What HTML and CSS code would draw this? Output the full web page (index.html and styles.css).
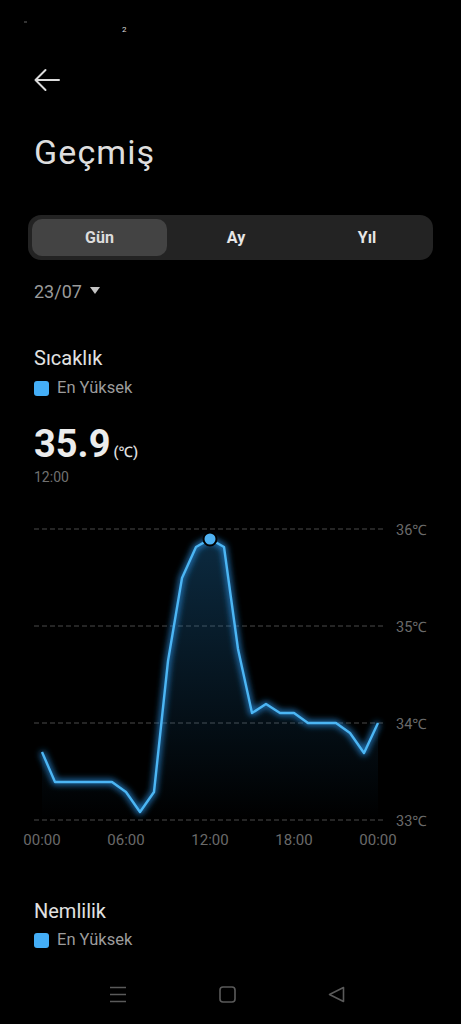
FILE: index.html
```html
<!DOCTYPE html>
<html lang="tr">
<head>
<meta charset="utf-8">
<title>Geçmiş</title>
<link rel="stylesheet" href="styles.css">
</head>
<body>
<div class="screen">
  <div class="statusbar"><span class="dot"></span><span class="sb-num">2</span></div>

  <div class="pad">
    <div class="topbar">
      <svg class="back" width="28" height="24" viewBox="0 0 28 24"><path d="M1.5 12 H25 M11.5 2 L1.5 12 L11.5 22" fill="none" stroke="#dcdcdc" stroke-width="2" stroke-linecap="round" stroke-linejoin="round"/></svg>
    </div>
    <h1 class="title">Geçmiş</h1>

    <div class="segmented">
      <div class="seg active">Gün</div>
      <div class="seg">Ay</div>
      <div class="seg">Yıl</div>
    </div>

    <div class="date">23/07 <span class="caret"></span></div>

    <div class="section-title first">Sıcaklık</div>
    <div class="legend"><span class="sq"></span>En Yüksek</div>

    <div class="value"><span class="num">35.9</span><span class="unit">(℃)</span></div>
    <div class="time">12:00</div>
  </div>

  <svg class="chart" width="461" height="340" viewBox="0 0 461 340">
    <defs>
      <linearGradient id="fillg" x1="0" y1="0" x2="0" y2="1">
        <stop offset="0" stop-color="#1f6fa8" stop-opacity="0.38"/>
        <stop offset="1" stop-color="#1f6fa8" stop-opacity="0"/>
      </linearGradient>
      <filter id="glow" x="-10%" y="-10%" width="120%" height="120%">
        <feGaussianBlur stdDeviation="3"/>
      </filter>
    </defs>
    <g class="grid">
      <line x1="34" y1="15" x2="386" y2="15"/>
      <line x1="34" y1="112" x2="386" y2="112"/>
      <line x1="34" y1="209" x2="386" y2="209"/>
      <line x1="34" y1="306" x2="386" y2="306"/>
    </g>
    <g class="ylab">
      <text x="396" y="21">36℃</text>
      <text x="396" y="118">35℃</text>
      <text x="396" y="215">34℃</text>
      <text x="396" y="312">33℃</text>
    </g>
    <polygon fill="url(#fillg)" points="42,238 55,268 112,268 126,278 140,298 154,278 168,147 182,64 196,33 210,25 224,33 238,135 252,199 266,190 280,199 294,199 308,209 336,209 350,219 364,239 378,209 378,306 42,306"/>
    <polyline filter="url(#glow)" fill="none" stroke="#2a8fe0" stroke-opacity="0.9" stroke-width="5" stroke-linejoin="round" points="42,238 55,268 112,268 126,278 140,298 154,278 168,147 182,64 196,33 210,25 224,33 238,135 252,199 266,190 280,199 294,199 308,209 336,209 350,219 364,239 378,209"/>
    <polyline fill="none" stroke="#4cb6f4" stroke-width="2.4" stroke-linejoin="round" points="42,238 55,268 112,268 126,278 140,298 154,278 168,147 182,64 196,33 210,25 224,33 238,135 252,199 266,190 280,199 294,199 308,209 336,209 350,219 364,239 378,209"/>
    <circle cx="210" cy="25" r="6.5" fill="#4fb2f2" stroke="#000" stroke-width="2"/>
    <g class="xlab">
      <text x="42" y="331">00:00</text>
      <text x="126" y="331">06:00</text>
      <text x="210" y="331">12:00</text>
      <text x="294" y="331">18:00</text>
      <text x="378" y="331">00:00</text>
    </g>
  </svg>

  <div class="pad">
    <div class="section-title second">Nemlilik</div>
    <div class="legend"><span class="sq"></span>En Yüksek</div>
  </div>

  <div class="navbar">
    <svg width="18" height="17" viewBox="0 0 18 17"><path d="M1 1.5 H17 M1 8.5 H17 M1 15.5 H17" stroke="#5a5a5a" stroke-width="1.6"/></svg>
    <svg width="17" height="17" viewBox="0 0 17 17"><rect x="1" y="1" width="15" height="15" rx="3" fill="none" stroke="#5a5a5a" stroke-width="1.6"/></svg>
    <svg width="17" height="17" viewBox="0 0 17 17"><path d="M15.5 1.5 L1.5 8.5 L15.5 15.5 Z" fill="none" stroke="#5a5a5a" stroke-width="1.6" stroke-linejoin="round"/></svg>
  </div>
</div>
</body>
</html>
```

FILE: styles.css
```css
* { box-sizing: border-box; }
html, body { margin: 0; padding: 0; background: #000; }
body {
  font-family: Roboto, "Noto Sans", "Liberation Sans", sans-serif;
  color: #e0e0e0;
}
.screen { width: 461px; height: 1024px; overflow: hidden; background: #000; }

.statusbar {
  height: 62px;
  display: flex;
  align-items: flex-start;
  padding: 20px 0 0 24px;
  gap: 95px;
}
.statusbar .dot { width: 3px; height: 2px; background: #333; margin-top: 1px; }
.statusbar .sb-num { font-size: 8px; color: #ddd; line-height: 10px; margin-top: 5px; }

.pad { padding: 0 29px 0 34px; }

.topbar { height: 36px; display: flex; align-items: center; }
.back { display: block; }

.title {
  margin: 34px 0 0;
  font-size: 34px;
  font-weight: 400;
  line-height: 40px;
  color: #dedede;
  letter-spacing: 1.1px;
}

.segmented {
  margin: 43px 0 0 -6px;
  width: 405px;
  height: 45px;
  background: #232323;
  border-radius: 13px;
  padding: 4px;
  display: grid;
  grid-template-columns: 135px 138px 1fr;
}
.seg {
  display: flex;
  align-items: center;
  justify-content: center;
  font-size: 16px;
  font-weight: 700;
  color: #e6e6e6;
  border-radius: 10px;
}
.seg.active { background: #434343; color: #dcdcdc; }

.date {
  margin-top: 21px;
  font-size: 18px;
  line-height: 22px;
  color: #9a9a9a;
  display: flex;
  align-items: center;
}
.caret {
  display: inline-block;
  margin-left: 8px;
  width: 0; height: 0;
  border-left: 5.5px solid transparent;
  border-right: 5.5px solid transparent;
  border-top: 7px solid #c4c4c4;
  margin-top: -3px;
}

.section-title {
  font-size: 20px;
  line-height: 24px;
  color: #e2e2e2;
}
.section-title.first { margin-top: 43px; }
.section-title.second { margin-top: 45px; }

.legend {
  margin-top: 7px;
  display: flex;
  align-items: center;
  font-size: 16.5px;
  line-height: 20px;
  color: #9c9c9c;
}
.sq {
  width: 15px; height: 15px;
  border-radius: 3px;
  background: #44aef7;
  margin-right: 8px;
}
.section-title.first + .legend { margin-top: 8px; }

.value {
  margin-top: 24px;
  display: flex;
  align-items: baseline;
  line-height: 44px;
}
.num { font-size: 38px; font-weight: 700; color: #ececec; }
.unit { font-size: 14.5px; font-weight: 500; color: #e0e0e0; margin-left: 3px; }

.time {
  margin-top: -8px;
  font-size: 14px;
  line-height: 20px;
  color: #707070;
}

.chart { display: block; margin-top: 27px; }
.grid line { stroke: #4a4a4a; stroke-width: 1; stroke-dasharray: 5 3; }
.ylab text { font-size: 14.5px; fill: #6a6a6a; font-family: Roboto, "Noto Sans", sans-serif; }
.xlab text { font-size: 15px; fill: #6a6a6a; text-anchor: middle; font-family: Roboto, "Noto Sans", sans-serif; }

.navbar {
  margin-top: 36px;
  display: flex;
  align-items: center;
  gap: 92px;
  padding-left: 109px;
}
.navbar svg { display: block; }
```
